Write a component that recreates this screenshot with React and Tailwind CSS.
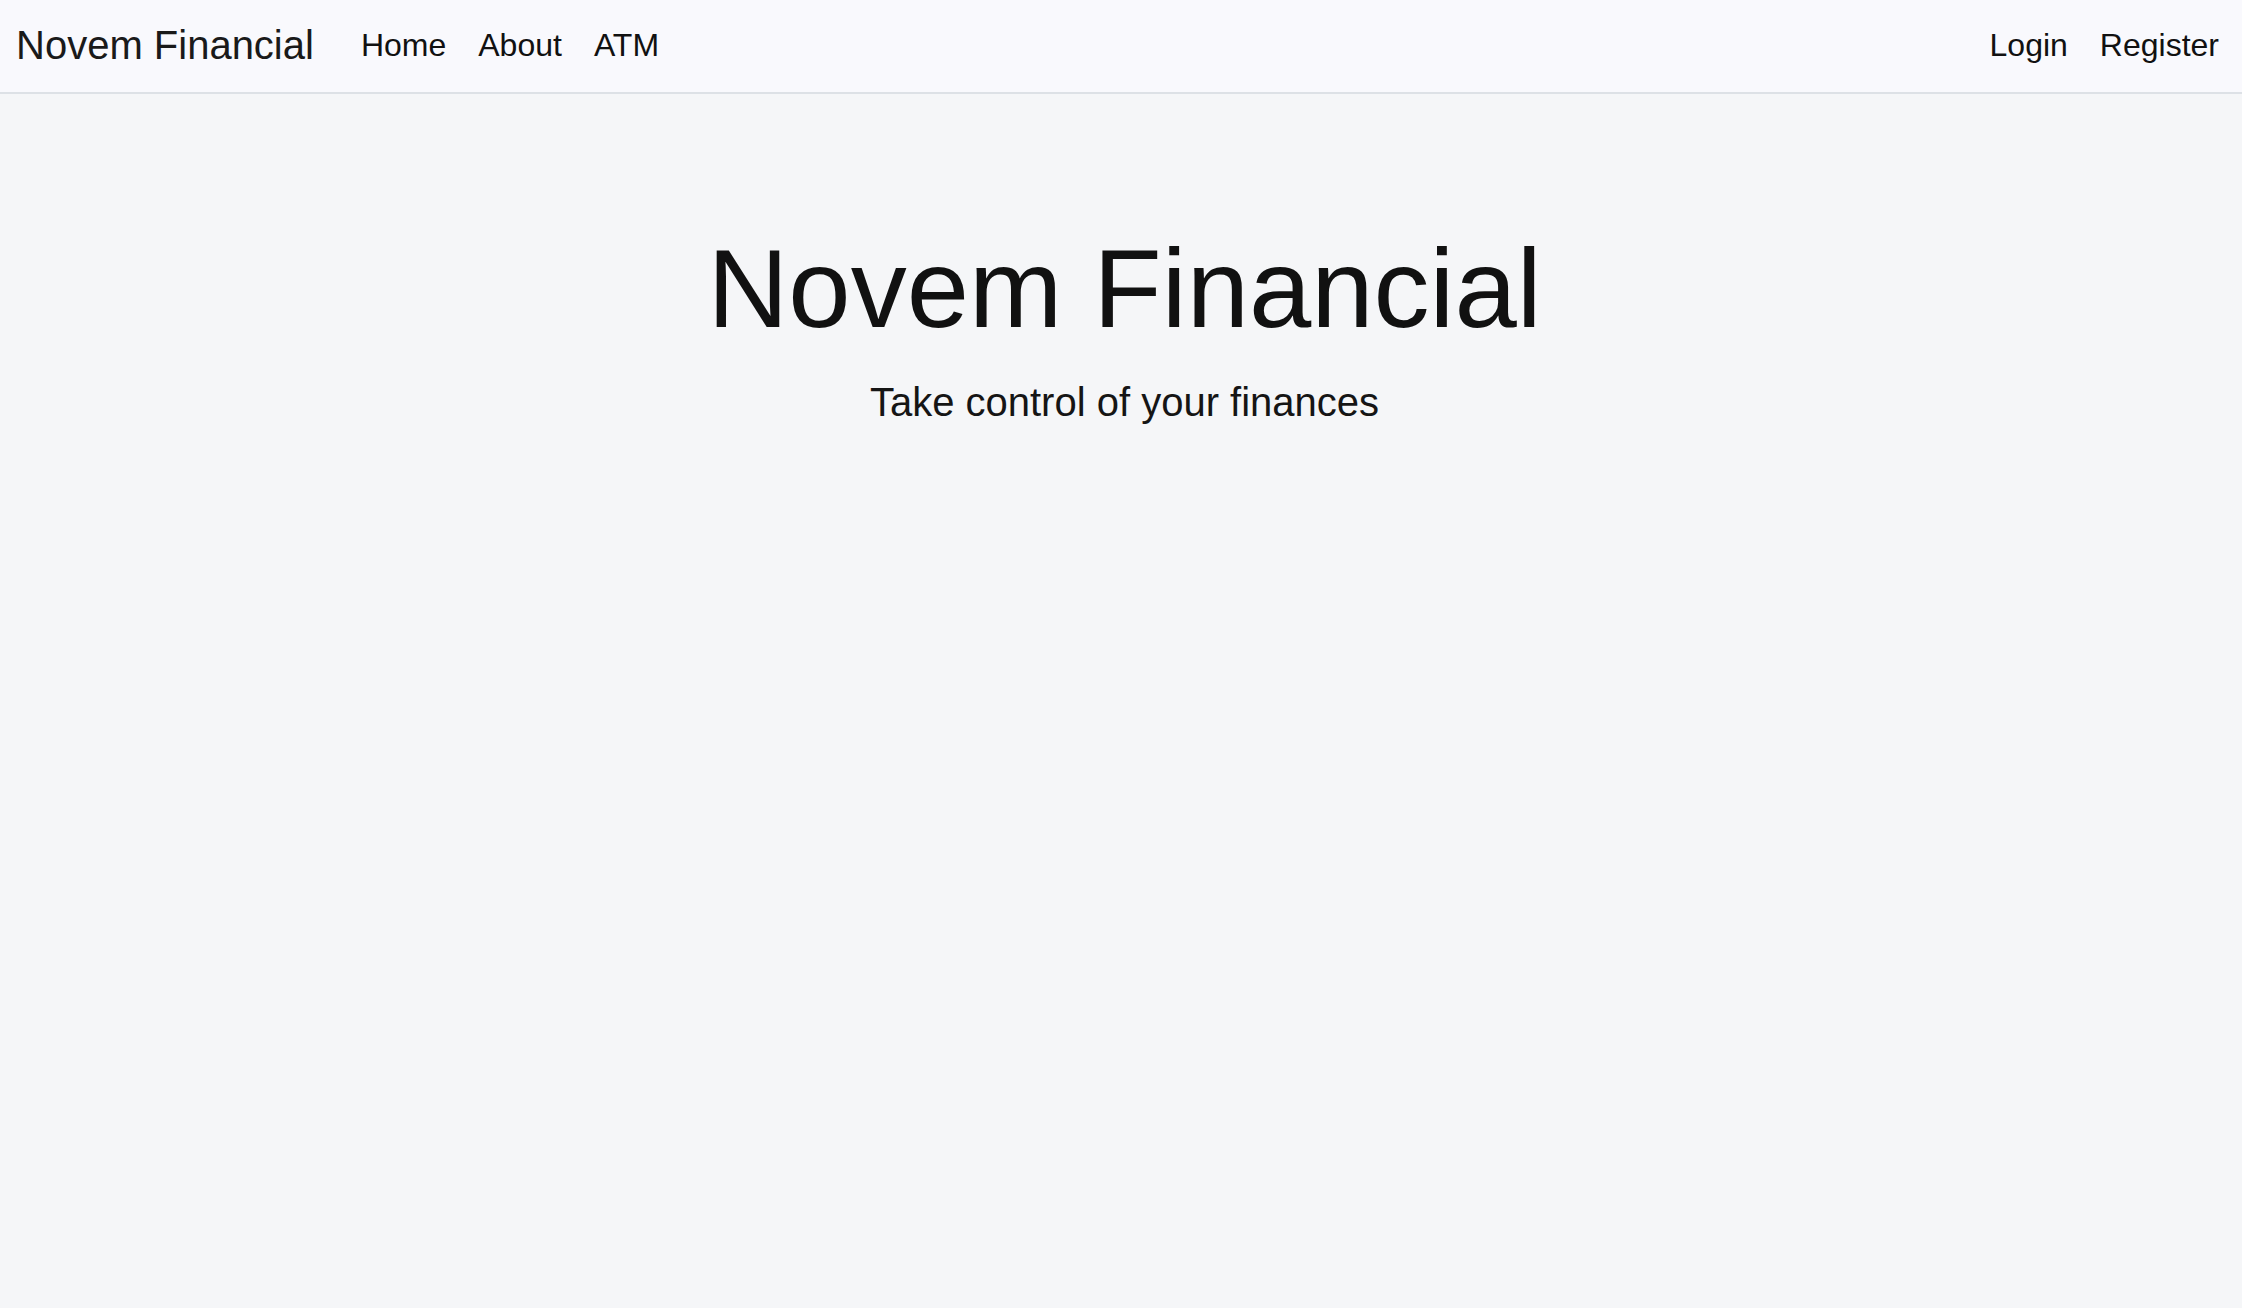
export default function App() {
  const font = { fontFamily: '"Liberation Sans", Arial, sans-serif' };
  return (
    <div className="min-h-[1308px] bg-[#f5f6f8] text-[#111]" style={font}>
      <nav className="h-[94px] bg-[#f9f9fd] border-b-2 border-[#dde1e6] flex items-center pl-[16px] pr-[7px]">
        <a className="text-[40px] leading-none text-[#1a1a1a] mr-[31px] -mt-[2px]">
          Novem Financial
        </a>
        <ul className="flex items-center text-[32px] leading-none text-[#111] -mt-[2px]">
          <li className="px-4">Home</li>
          <li className="px-4">About</li>
          <li className="px-4">ATM</li>
        </ul>
        <ul className="ml-auto flex items-center text-[32px] leading-none text-[#111] -mt-[2px]">
          <li className="px-4">Login</li>
          <li className="px-4">Register</li>
        </ul>
      </nav>
      <main className="pt-[128px] pl-[7px] text-center">
        <h1 className="text-[112px] leading-[134px] text-[#111] mb-4">
          Novem Financial
        </h1>
        <p className="text-[40px] leading-[60px] text-[#151515]">
          Take control of your finances
        </p>
      </main>
    </div>
  );
}
